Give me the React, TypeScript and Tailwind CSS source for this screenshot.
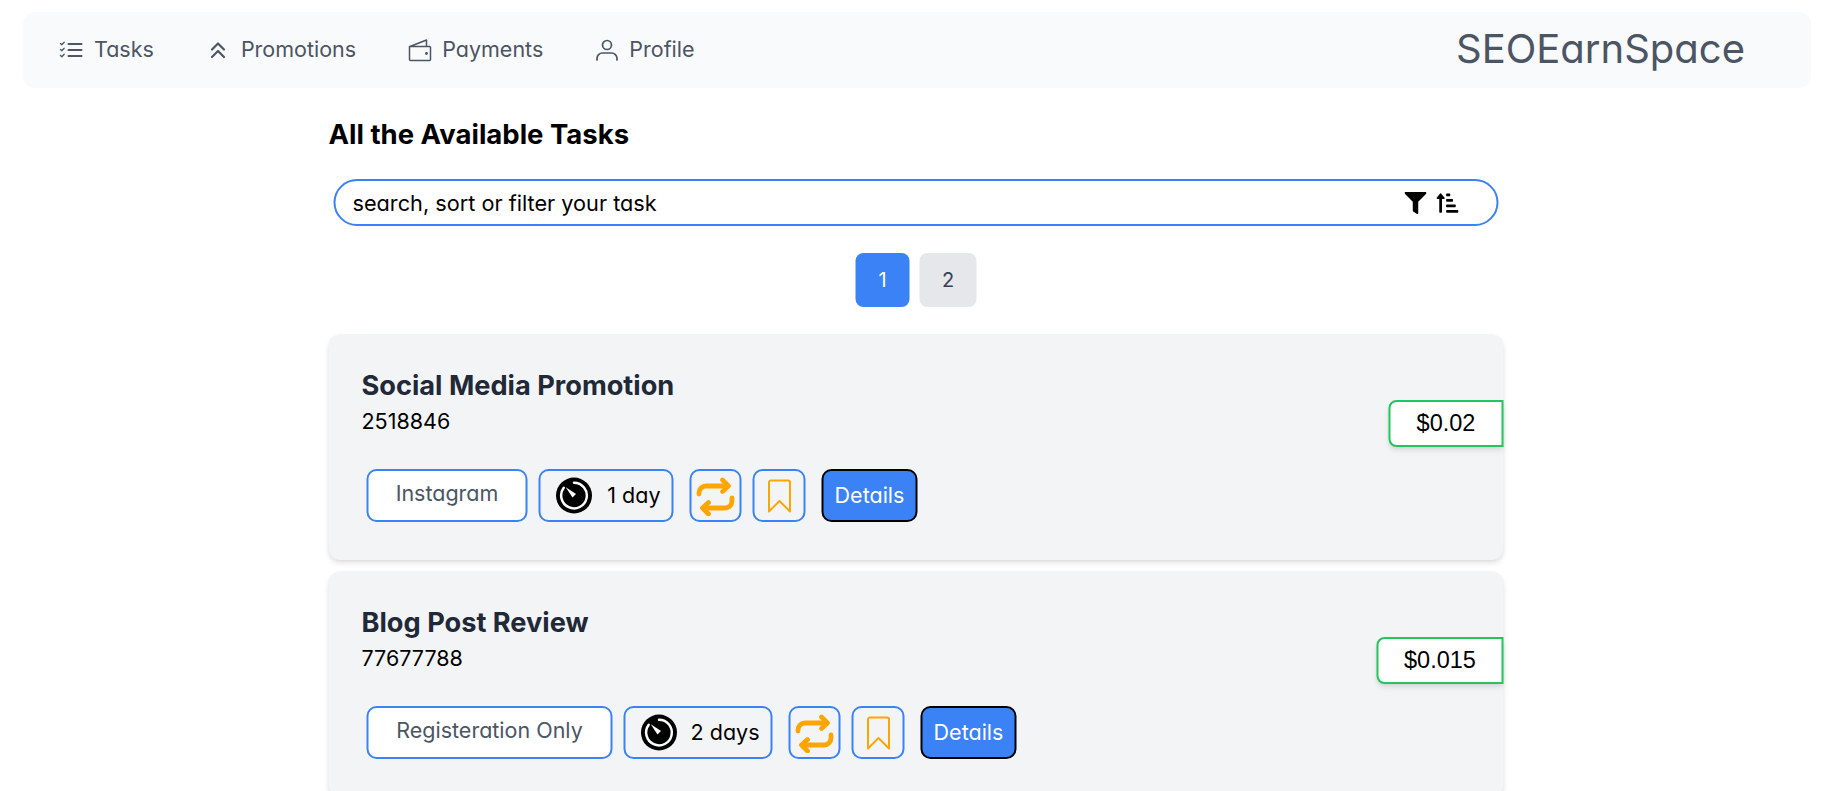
import React from "react";
import { FaFilter, FaSortAmountUpAlt } from "react-icons/fa";

const body = "[font-family:Inter,'Noto_Sans',sans-serif] [font-feature-settings:'cv11']";

function TasksIcon() {
  return (
    <svg width="24" height="24" viewBox="0 0 24 24" fill="none" stroke="currentColor" strokeWidth="1.6" strokeLinecap="round" strokeLinejoin="round">
      <path d="M9.500 6h13M9.500 12h13M9.500 18h13" strokeWidth="2" />
      <path d="M1.500 5.500l1.300 1.300 2.400-2.600M1.500 11.500l1.300 1.300 2.400-2.600M1.500 17.500l1.300 1.300 2.400-2.600" strokeWidth="1.300" />
    </svg>
  );
}
function PromoIcon() {
  return (
    <svg width="24" height="24" viewBox="0 0 24 24" fill="none" stroke="currentColor" strokeWidth="2.200" strokeLinecap="round" strokeLinejoin="round">
      <path d="M6 11.500L12 5.500l6 6M6 19L12 13l6 6" />
    </svg>
  );
}
function WalletIcon() {
  return (
    <svg width="24" height="24" viewBox="0 0 24 24" fill="none" stroke="currentColor" strokeWidth="1.500" strokeLinecap="round" strokeLinejoin="round">
      <path d="M1.500 8.500h20a1 1 0 0 1 1 1V21.500a1 1 0 0 1-1 1h-19a1 1 0 0 1-1-1V8.500zM2 8.500L18.500 2v6.500" />
      <circle cx="18.500" cy="15.500" r="0.700" fill="currentColor" />
    </svg>
  );
}
function UserIcon() {
  return (
    <svg width="24" height="24" viewBox="0 0 24 24" fill="none" stroke="currentColor" strokeWidth="1.700" strokeLinecap="round" strokeLinejoin="round">
      <circle cx="12" cy="7" r="4.500" />
      <path d="M2 22v-1.500a5.500 5.500 0 0 1 5.500-5.500h9a5.500 5.500 0 0 1 5.500 5.500V22" />
    </svg>
  );
}
function TimerIcon() {
  return (
    <svg width="37" height="37" viewBox="0 0 36 36" className="shrink-0">
      <circle cx="18" cy="18" r="17.500" fill="#000" />
      <path d="M18 5.500A12.500 12.500 0 1 1 8 10.500" fill="none" stroke="#fff" strokeWidth="2.400" strokeLinecap="round" />
      <path d="M10 10l10 6.500-3.500 3.500z" fill="#fff" />
    </svg>
  );
}
function RepeatIcon() {
  return (
    <svg width="40" height="40" viewBox="0 0 40 40" fill="none" stroke="#ffa500" strokeWidth="4.800" strokeLinecap="round" strokeLinejoin="round">
      <path d="M3.500 18v-1a7 7 0 0 1 7-7H32" />
      <path d="M27 4l6 6-6 5.500" />
      <path d="M36.500 22v3a7 7 0 0 1-7 7H8" />
      <path d="M13 26.500L7 32l6 6" />
    </svg>
  );
}
function BookmarkIcon() {
  return (
    <svg width="24" height="34" viewBox="0 0 24 34" fill="none" stroke="#ffa500" strokeWidth="2" strokeLinejoin="round">
      <path d="M1.500 3.500a2 2 0 0 1 2-2h17a2 2 0 0 1 2 2V32.500L12 22 1.500 32.500z" />
    </svg>
  );
}

function NavItem({ icon, label, gap }: { icon: React.ReactNode; label: string; gap: string }) {
  return (
    <div className={`flex items-center ${gap} text-[#4b5563]`}>
      {icon}
      <span className="pb-[2px] text-[21.500px] leading-7">{label}</span>
    </div>
  );
}

function TaskCard({ title, id, price, tag, tagW, time, timeW, priceW }: { title: string; id: string; price: string; tag: string; tagW: string; time: string; timeW: string; priceW: string }) {
  return (
    <div className="relative h-[226px] rounded-xl bg-[#f3f4f6] pt-[33px] pl-[33px] shadow-md">
      <h2 className="text-[27.200px] font-bold leading-[38px] text-[#1f2937] [font-feature-settings:normal]">{title}</h2>
      <p className="mt-[2px] text-[21.500px] leading-7 text-black">{id}</p>
      <div className="mt-[34px] ml-[5px] flex h-[53px] items-stretch">
        <div className={`${tagW} flex items-center justify-center rounded-[10px] border-2 border-[#3b82f6] bg-white pb-[4px] text-[21.500px] text-[#4b5563]`}>{tag}</div>
        <div className={`${timeW} ml-[11px] flex items-center justify-between rounded-[10px] border-2 border-[#3b82f6] pr-[11px] pl-[15px] text-[21.500px] text-black`}>
          <TimerIcon />
          <span>{time}</span>
        </div>
        <div className="ml-[16px] flex w-[52px] items-center justify-center rounded-[10px] border-2 border-[#3b82f6]"><RepeatIcon /></div>
        <div className="ml-[11px] flex w-[53px] items-center justify-center rounded-[10px] border-2 border-[#3b82f6]"><BookmarkIcon /></div>
        <div className="ml-[16px] flex w-[96px] items-center justify-center rounded-[10px] border-2 border-black bg-[#3b82f6] text-[21.500px] text-white">Details</div>
      </div>
      <div className={`${priceW} absolute top-[66px] right-0 flex h-[47px] items-center justify-center rounded-l-lg border-2 border-[#22c55e] bg-white text-[23.500px] text-black shadow-md [font-family:'Liberation_Sans',sans-serif]`}>{price}</div>
    </div>
  );
}

export default function App() {
  return (
    <div className={`h-screen overflow-hidden bg-white ${body}`}>
      <nav className="mt-[12px] mr-[26px] ml-[23px] flex h-[76px] items-center justify-between rounded-xl bg-[#f9fafb] pr-[66px] pl-[36px]">
        <div className="flex items-center">
          <NavItem icon={<TasksIcon />} label="Tasks" gap="gap-[11px]" />
          <div className="w-[52px]" />
          <NavItem icon={<PromoIcon />} label="Promotions" gap="gap-[11px]" />
          <div className="w-[52px]" />
          <NavItem icon={<WalletIcon />} label="Payments" gap="gap-[10px]" />
          <div className="w-[52px]" />
          <NavItem icon={<UserIcon />} label="Profile" gap="gap-[10px]" />
        </div>
        <div className="pb-[2px] text-[40px] leading-none text-[#4b5563]">SEOEarnSpace</div>
      </nav>
      <main className="mx-auto mt-[30px] w-[1175px] translate-x-[-2.500px]">
        <h1 className="text-[27.500px] leading-8 font-bold text-black [font-feature-settings:normal]">All the Available Tasks</h1>
        <div className="mx-[5px] mt-[29px] flex h-[47px] items-center rounded-full border-2 border-[#3b82f6] pr-[38px] pl-[17px]">
          <span className="flex-1 pt-[1px] text-[21.700px] text-black">search, sort or filter your task</span>
          <div className="flex items-center gap-[10px] text-black">
            <FaFilter size={22} />
            <FaSortAmountUpAlt size={22} />
          </div>
        </div>
        <div className="mt-[27px] flex justify-center gap-[10px]">
          <div className="flex h-[54px] w-[54px] items-center justify-center rounded-lg bg-[#3b82f6] text-[20px] text-white">1</div>
          <div className="flex h-[54px] w-[57px] items-center justify-center rounded-lg bg-[#e5e7eb] text-[20px] text-[#374151]">2</div>
        </div>
        <div className="mt-[27px] flex flex-col gap-[11px]">
          <TaskCard title="Social Media Promotion" id="2518846" price="$0.02" priceW="w-[115px]" tag="Instagram" tagW="w-[161px]" time="1 day" timeW="w-[135px]" />
          <TaskCard title="Blog Post Review" id="77677788" price="$0.015" priceW="w-[127px]" tag="Registeration Only" tagW="w-[246px]" time="2 days" timeW="w-[149px]" />
        </div>
      </main>
    </div>
  );
}
